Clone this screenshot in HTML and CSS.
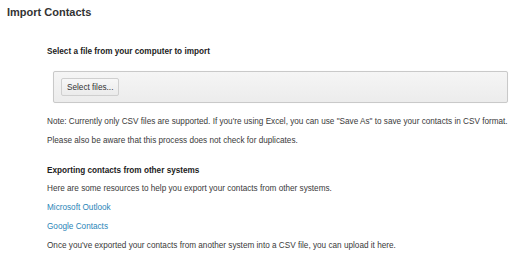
FILE: index.html
```html
<!DOCTYPE html>
<html>
<head>
<meta charset="utf-8">
<link rel="stylesheet" href="styles.css">
</head>
<body>
<div class="page">
  <h1 class="title">Import Contacts</h1>
  <div class="content">
    <h2 class="subhead first">Select a file from your computer to import</h2>
    <div class="upload">
      <button class="btn">Select files...</button>
    </div>
    <p class="text">Note: Currently only CSV files are supported. If you're using Excel, you can use "Save As" to save your contacts in CSV format.</p>
    <p class="text">Please also be aware that this process does not check for duplicates.</p>
    <h2 class="subhead">Exporting contacts from other systems</h2>
    <p class="text">Here are some resources to help you export your contacts from other systems.</p>
    <p class="text"><a class="link" href="#">Microsoft Outlook</a></p>
    <p class="text"><a class="link" href="#">Google Contacts</a></p>
    <p class="text">Once you've exported your contacts from another system into a CSV file, you can upload it here.</p>
  </div>
</div>
</body>
</html>
```
FILE: styles.css
```css
html, body {
  margin: 0;
  padding: 0;
  background: #ffffff;
}
body {
  font-family: "Liberation Sans", Arial, sans-serif;
  color: #333333;
}
.page {
  padding: 5px 7px;
}
.title {
  margin: 0;
  font-size: 11px;
  line-height: 14px;
  font-weight: bold;
  color: #333333;
}
.content {
  padding-left: 40px;
}
.subhead {
  margin: 0;
  font-size: 8.2px;
  line-height: 11px;
  font-weight: bold;
  color: #222222;
}
.subhead.first {
  margin-top: 27px;
}
.subhead + .text {
  margin-top: 7px;
}
.upload {
  margin: 14px 3px 0 6px;
  height: 30px;
  border: 1px solid #c9c9c9;
  border-radius: 2px;
  background: linear-gradient(#f5f5f5, #ececec);
  box-shadow: 0 0 1px rgba(0,0,0,0.1);
  display: flex;
  align-items: center;
  padding-left: 7px;
}
.btn {
  font-family: "Liberation Sans", Arial, sans-serif;
  font-size: 8.2px;
  color: #333333;
  height: 18px;
  padding: 0 5px;
  border: 1px solid #cfcfcf;
  border-radius: 2px;
  background: linear-gradient(#f7f7f7, #ebebeb);
}
.text {
  margin: 8px 0 0 0;
  font-size: 8.2px;
  line-height: 11px;
  color: #3a3a3a;
  white-space: nowrap;
}
.text + .text {
  margin-top: 8px;
}
.content > .upload + .text {
  margin-top: 13px;
}
.text + .subhead {
  margin-top: 19px;
}
.link {
  color: #2a85b8;
  text-decoration: none;
}
```
